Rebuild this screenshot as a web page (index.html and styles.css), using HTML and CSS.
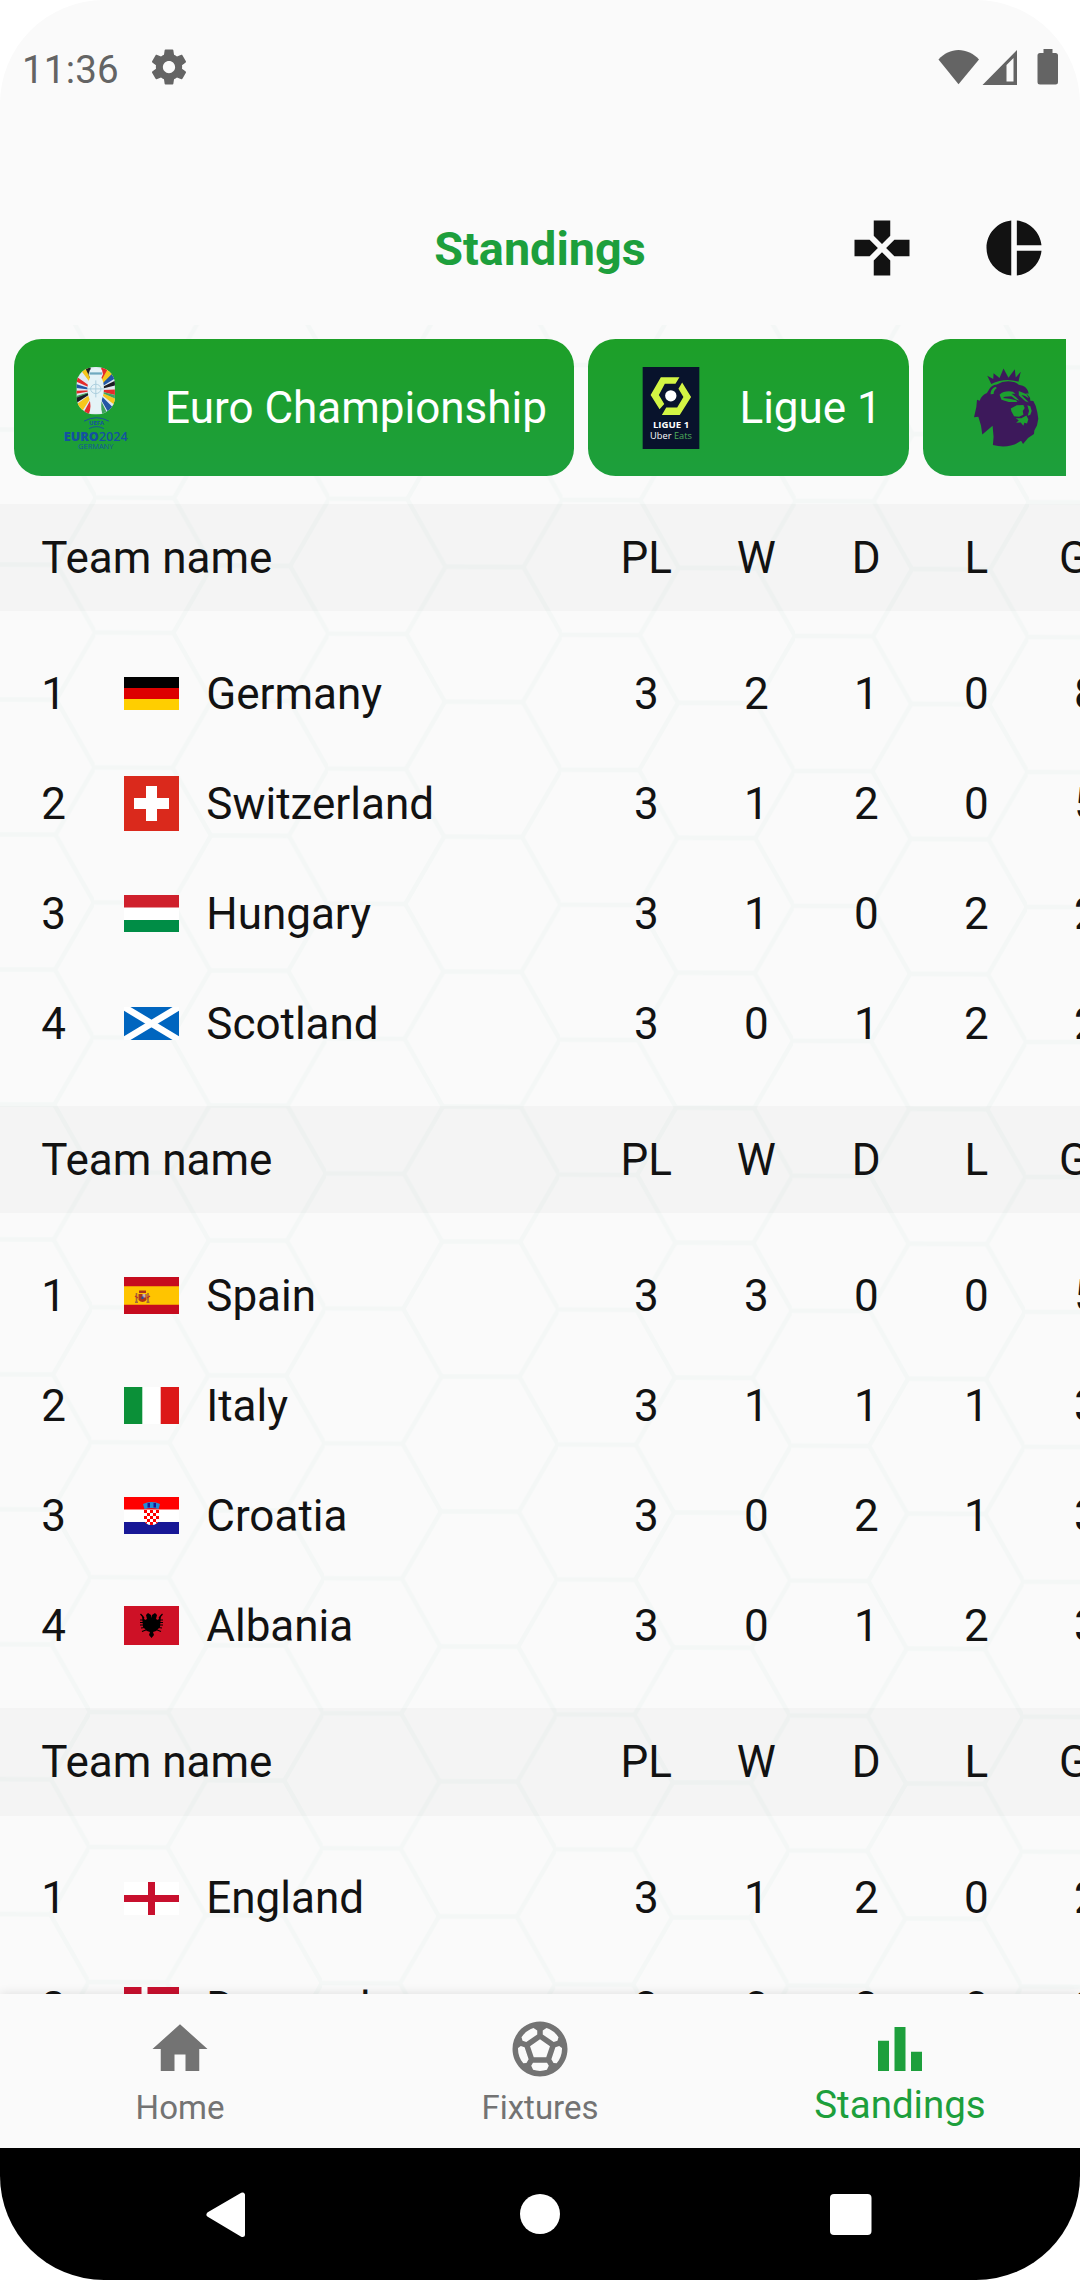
FILE: index.html
```html
<!DOCTYPE html>
<html lang="en">
<head>
<meta charset="utf-8">
<title>Standings</title>
<link rel="stylesheet" href="styles.css">
</head>
<body>
<div class="screen">
  <header class="status">
    <span class="clock">11:36</span>
    <svg class="gear" viewBox="0 0 24 24"><path d="M19.430 12.980c.04-.320.070-.640.070-.980s-.030-.660-.070-.980l2.110-1.650c.190-.150.240-.420.120-.640l-2-3.460c-.120-.220-.390-.300-.610-.220l-2.490 1c-.520-.400-1.080-.730-1.690-.980l-.380-2.650C14.460 2.180 14.250 2 14 2h-4c-.250 0-.460.180-.490.420l-.380 2.650c-.610.250-1.170.590-1.690.980l-2.490-1c-.230-.090-.490 0-.610.220l-2 3.460c-.130.220-.070.490.120.640l2.110 1.650c-.040.320-.070.650-.070.980s.030.660.070.980l-2.110 1.650c-.190.150-.240.420-.120.640l2 3.460c.120.220.390.300.610.220l2.490-1c.520.400 1.080.730 1.690.980l.380 2.650c.030.240.240.420.490.420h4c.250 0 .460-.180.490-.420l.380-2.650c.610-.250 1.170-.590 1.690-.980l2.490 1c.230.090.490 0 .610-.220l2-3.460c.120-.220.070-.490-.120-.640l-2.110-1.650zM12 15.500c-1.930 0-3.500-1.570-3.500-3.500s1.570-3.500 3.500-3.500 3.500 1.570 3.500 3.500-1.570 3.500-3.500 3.500z"/></svg>
    <svg class="signals" viewBox="0 0 122 38">
      <path d="M0.500 11.500C6 5.500 13 2 20.500 2S35.500 5.500 41 11.500L20.500 36.300Z"/>
      <path fill-rule="evenodd" d="M44.500 37L79 2v35zM68.500 17v16.500h7V10z"/>
      <path d="M105.500 1h9v4h3a2.500 2.500 0 0 1 2.500 2.500v26.500a2.500 2.500 0 0 1-2.500 2.500h-15.500a2.500 2.500 0 0 1-2.500-2.500V7.500A2.500 2.500 0 0 1 102 5h3.500z"/>
    </svg>
  </header>

  <div class="appbar">
    <h1>Standings</h1>
    <nav class="actions">
      <svg viewBox="0 0 24 24"><path d="M15 7.500V2H9v5.500l3 3 3-3zM7.500 9H2v6h5.500l3-3-3-3zM9 16.500V22h6v-5.500l-3-3-3 3zM16.500 9l-3 3 3 3H22V9h-5.500z"/></svg>
      <svg viewBox="0 0 24 24"><path d="M11 2v20c-5.070-.5-9-4.790-9-10s3.930-9.500 9-10zm2.030 0v8.990H22c-.470-4.740-4.240-8.520-8.970-8.990zm0 11.010V22c4.740-.470 8.500-4.250 8.970-8.990h-8.970z"/></svg>
    </nav>
  </div>

  <main class="content">
    <svg class="hexes" width="1080" height="1669">
      <defs>
        <pattern id="hex" width="233.250" height="134.950" patternUnits="userSpaceOnUse" patternTransform="translate(95.300 307.500) rotate(0.28)">
          <path class="cell" d="M-10 0H78L116.600 67.500H194.600L233.250 0M194.600 67.500L233.250 134.950H243M116.600 67.500L78 134.950H-10"/>
        </pattern>
      </defs>
      <rect width="1080" height="1669" fill="url(#hex)"/>
    </svg>

    <div class="leagues">
      <div class="chip">
        <svg class="logo" viewBox="0 0 110 83">
          <defs><clipPath id="oval"><rect x="35.500" y="0" width="38.500" height="53" rx="18.500"/></clipPath></defs>
          <g transform="scale(1 .9)">
            <g clip-path="url(#oval)">
              <path fill="#dfe9f2" d="M35 0h40v53H35z"/>
              <path fill="#f6c61c" d="M54.800 26L46-6 36-2zM54.800 26L66-2 76 6zM54.800 26L30 46 36 58zM54.800 26L80 38 80 48z"/>
              <path fill="#1c1c24" d="M54.800 26L42-4 48-6zM54.800 26L80 12 80 19zM54.800 26L28 36 30 44z"/>
              <path fill="#e42c2c" d="M54.800 26L24 2 26 12zM54.800 26L62-6 70-4zM54.800 26L24 27 24 32zM54.800 26L80 25 80 33zM54.800 26L38 60 46 60z"/>
              <path fill="#2257a5" d="M54.800 26L26 16 24 22zM54.800 26L76 2 80 9zM54.800 26L72 60 78 52z"/>
              <path fill="#40a45c" d="M54.800 26L27 35 25 39zM54.800 26L80 33 80 38zM54.800 26L63 60 70 60z"/>
            </g>
            <path fill="#e5f3f7" d="M49 3c3-2 9-2 12 0l1 5-1.500 4c3 6 3.500 16 .5 24-1 5-1 10 0 16H48.500c1.500-6 1-11 0-16-3-8-2.500-18 .5-24L47.500 8z"/>
            <path fill="#6fa9bf" d="M48.500 6h12.500v2.500H48.500z"/>
            <path class="trophy" d="M54.800 15v19M46 24.500h17.500M60 24.500a5 5 0 1 1-10.400 0a5 5 0 1 1 10.400 0"/>
          </g>
          <path class="arcs" d="M43 54.500q12.500-7 25 0M48 62q7.500-4 15 0"/>
          <text class="uefa" x="55.500" y="58.800">UEFA</text>
          <text class="euro" x="22.500" y="74.200" textLength="64.500" lengthAdjust="spacingAndGlyphs"><tspan class="heavy">EURO</tspan>2024</text>
          <text class="host" x="37" y="82.300" textLength="35.500" lengthAdjust="spacingAndGlyphs">GERMANY</text>
        </svg>
        <span>Euro Championship</span>
      </div>
      <div class="chip">
        <svg class="logo" viewBox="0 0 110 83">
          <path fill="#08132c" d="M26.500 0h57v82.500h-57z"/>
          <path fill="#d3f544" d="M44.800 10.200h18.700l-4 6.600H48.800l-6 11.400 5.400 9-4.700 5.300-9-14.300zM66.200 15.500l9 14.700-11.400 18h-18l4.400-7.400h11l6.300-10.600-5-8.400z"/>
          <circle cx="54.800" cy="29" r="5.700" fill="#fff"/>
          <text class="ligue" x="36.800" y="61" textLength="36.500" lengthAdjust="spacingAndGlyphs">LIGUE 1</text>
          <text class="sponsor" x="34" y="72" textLength="42" lengthAdjust="spacingAndGlyphs">Uber <tspan fill="#4fae5b">Eats</tspan></text>
        </svg>
        <span>Ligue 1</span>
      </div>
      <div class="chip">
        <svg class="logo" viewBox="0 0 110 83">
          <g transform="translate(14.500 -4.500) scale(.3333)">
            <path fill="#3d195b" d="M65 40l18 10 1-18 18 15 12-29 15 28 19-26 3 25 15-17-7 30q-42-13-82 7z"/>
            <path fill="#3d195b" d="M70 82Q76 68 94 66Q112 55 135 57Q152 58 160 67L172 70Q188 77 190 94L182 92L194 106L195 115L204 116Q214 132 216 150L219 170L215 190L207 205L206 216L188 228L173 246L167 236Q130 262 82 249L84 224L81 191L50 217L46 190L38 164L25 165L32 134L34 112L42 115Q48 98 64 92Z"/>
            <g fill="#1d9f30">
              <path d="M75 96Q74 80 90 73L94 77Q84 84 84 95Z"/>
              <path d="M102 97Q116 84 142 88L150 94L138 94L152 105L162 115L150 111L138 102L118 103L112 107L132 109L152 114L156 119L130 119L108 112Z"/>
              <path d="M160 86L184 96L190 108L178 100L168 98L184 114L190 121L180 117L160 99Z"/>
              <path d="M136 139L154 129L174 128L178 137L172 146L174 158L161 164L146 162L138 148Z"/>
              <path d="M186 129L195 132L199 146L195 158L187 161L191 146Z"/>
              <path d="M151 168L168 168L183 160L189 171L185 184L177 182L174 191L166 181L152 182L160 175Z"/>
            </g>
          </g>
        </svg>
        <span>Premier League</span>
      </div>
    </div>

    <section class="group">
      <div class="row head first"><b class="team">Team name</b><i>PL</i><i>W</i><i>D</i><i>L</i><i>GF</i></div>
      <div class="rows">
        <div class="row"><b class="rank">1</b><svg class="flag" viewBox="0 0 55 33"><path d="M0 0h55v11H0z"/><path fill="#d00" d="M0 11h55v11H0z"/><path fill="#ffce00" d="M0 22h55v11H0z"/></svg><b class="name">Germany</b><i>3</i><i>2</i><i>1</i><i>0</i><i>8</i></div>
        <div class="row"><b class="rank">2</b><svg class="flag" viewBox="0 0 55 55"><path fill="#da291c" d="M0 0h55v55H0z"/><path fill="#fff" d="M22 10h11v12h12v11H33v12H22V33H10V22h12z"/></svg><b class="name">Switzerland</b><i>3</i><i>1</i><i>2</i><i>0</i><i>5</i></div>
        <div class="row"><b class="rank">3</b><svg class="flag" viewBox="0 0 55 37"><path fill="#fff" d="M0 0h55v37H0z"/><path fill="#cf202c" d="M0 0h55v12.500H0z"/><path fill="#008d46" d="M0 25h55v12H0z"/></svg><b class="name">Hungary</b><i>3</i><i>1</i><i>0</i><i>2</i><i>2</i></div>
        <div class="row"><b class="rank">4</b><svg class="flag" viewBox="0 0 55 33"><path fill="#0065bf" d="M0 0h55v33H0z"/><path stroke="#fff" stroke-width="6.600" d="M0 0l55 33M55 0L0 33"/></svg><b class="name">Scotland</b><i>3</i><i>0</i><i>1</i><i>2</i><i>2</i></div>
      </div>
    </section>
    <section class="group">
      <div class="row head"><b class="team">Team name</b><i>PL</i><i>W</i><i>D</i><i>L</i><i>GF</i></div>
      <div class="rows">
        <div class="row"><b class="rank">1</b><svg class="flag" viewBox="0 0 55 37"><path fill="#c60b1e" d="M0 0h55v37H0z"/><path fill="#ffc400" d="M0 9.250h55v18.500H0z"/><path fill="#ad3519" d="M14.500 17h8v6q-4 4-8 0zM15 13.500h7v2.500h-7z"/><path fill="#c8b0b0" d="M18.500 17h3v3.500h-3z"/><path fill="#1d50a0" d="M17.500 19.500h2V22h-2z"/><path stroke="#a1673b" stroke-width="1.600" d="M12.500 16v9.500M24 16v9.500M11 25.200h3M22.500 25.200h3"/><path stroke="#c0302b" stroke-width="1.400" d="M11 19l3 2M23 21l3-2"/></svg><b class="name">Spain</b><i>3</i><i>3</i><i>0</i><i>0</i><i>5</i></div>
        <div class="row"><b class="rank">2</b><svg class="flag" viewBox="0 0 55 37"><path fill="#fff" d="M0 0h55v37H0z"/><path fill="#0b9038" d="M0 0h18.300v37H0z"/><path fill="#dc1818" d="M36.700 0H55v37H36.700z"/></svg><b class="name">Italy</b><i>3</i><i>1</i><i>1</i><i>1</i><i>3</i></div>
        <div class="row"><b class="rank">3</b><svg class="flag" viewBox="0 0 55 37"><defs><clipPath id="shield"><path d="M20 13h15v9q-1 6-7.500 6T20 22z"/></clipPath></defs><path fill="#fff" d="M0 12h55v13H0z"/><path fill="red" d="M0 0h55v12.500H0z"/><path fill="#171796" d="M0 25h55v12H0z"/><g clip-path="url(#shield)"><path fill="#fff" d="M20 12h15v17H20z"/><path stroke="red" stroke-width="3" stroke-dasharray="3 3" d="M20 14.500h15M20 20.500h15M20 26.500h15M23 17.500h12M23 23.500h12"/></g><path fill="#1f8fd8" d="M19 7l4-1.500 4.500-.5 4.500.5L36 7l-1.500 5q-7-2-14 0z"/><path fill="#171796" d="M23.500 6h2.500v4.500h-2.500zM29.500 6H32v4.500h-2.500z"/></svg><b class="name">Croatia</b><i>3</i><i>0</i><i>2</i><i>1</i><i>3</i></div>
        <div class="row"><b class="rank">4</b><svg class="flag" viewBox="0 0 55 39"><path fill="#ce1126" d="M0 0h55v39H0z"/><path d="M22 9l2-2 3 2 .5 3 .5-3 3-2 2 2-1 4 2 1 3-5-1 12-4 4-3 1 1 3-2.500 3-2.500-3 1-3-3-1-4-4-1-12 3 5 2-1z"/><path stroke="#000" stroke-width="1.200" d="M20 12l-3.500-4M20 14h-4M20 16.500h-4M20 19h-4M21 21.500l-4 .5M35 12l3.500-4M35 14h4M35 16.500h4M35 19h4M34 21.500l4 .5M23 23.500l-5 2M32 23.500l5 2M27.500 25v6"/></svg><b class="name">Albania</b><i>3</i><i>0</i><i>1</i><i>2</i><i>3</i></div>
      </div>
    </section>
    <section class="group">
      <div class="row head"><b class="team">Team name</b><i>PL</i><i>W</i><i>D</i><i>L</i><i>GF</i></div>
      <div class="rows">
        <div class="row"><b class="rank">1</b><svg class="flag" viewBox="0 0 55 33"><path fill="#fff" d="M0 0h55v33H0z"/><path fill="#c8102e" d="M24 0h7v13h24v7H31v13h-7V20H0v-7h24z"/></svg><b class="name">England</b><i>3</i><i>1</i><i>2</i><i>0</i><i>2</i></div>
        <div class="row"><b class="rank">2</b><svg class="flag" viewBox="0 0 55 42"><path fill="#c8102e" d="M0 0h55v42H0z"/><path fill="#fff" d="M17.500 0h6v18H55v6H23.500v18h-6V24H0v-6h17.500z"/></svg><b class="name">Denmark</b><i>3</i><i>0</i><i>3</i><i>0</i><i>2</i></div>
      </div>
    </section>
  </main>

  <nav class="tabs">
    <a class="tab"><svg viewBox="0 0 24 24"><path d="M10 20v-6h4v6h5v-8h3L12 3 2 12h3v8z"/></svg><span>Home</span></a>
    <a class="tab"><svg viewBox="0 0 24 24"><path d="M12 2C6.480 2 2 6.480 2 12s4.480 10 10 10 10-4.480 10-10S17.520 2 12 2zm1 3.300l1.350-.95c1.820.56 3.370 1.760 4.380 3.340l-.39 1.340-1.350.46L13 6.700V5.300zm-3.350-.95L11 5.300v1.400L7.010 9.490l-1.350-.46-.39-1.340c1.010-1.570 2.560-2.770 4.380-3.340zM7.080 17.110l-1.140.1C4.730 15.810 4 13.990 4 12c0-.12.010-.23.020-.35l1-.73 1.380.48 1.460 4.340-.78 1.370zm7.420 2.480c-.79.26-1.630.41-2.500.41s-1.710-.15-2.500-.41l-.69-1.490.64-1.100h5.110l.64 1.110-.7 1.480zM14.270 15H9.730l-1.350-4.020L12 8.440l3.630 2.540L14.270 15zm3.790 2.210l-1.140-.1-.79-1.370 1.460-4.340 1.390-.47 1 .73c.010.110.020.220.020.340 0 1.990-.73 3.810-1.940 5.210z"/></svg><span>Fixtures</span></a>
    <a class="tab active"><svg viewBox="0 0 24 24"><path d="M4 9h4v11H4zm12 4h4v7h-4zm-6-9h4v16h-4z"/></svg><span>Standings</span></a>
  </nav>

  <footer class="sysnav">
    <svg viewBox="0 0 1080 132">
      <path stroke="#fff" stroke-width="5" stroke-linejoin="round" d="M209 66.500L242.500 47v39.500z"/>
      <circle cx="540" cy="66" r="20"/>
      <rect x="830" y="46" width="41.500" height="41" rx="4"/>
    </svg>
  </footer>
</div>
</body>
</html>
```
FILE: styles.css
```css
* { box-sizing: border-box; }
body { margin: 0; background: #fff; font-family: Roboto, sans-serif; }
b, i { font-weight: 400; font-style: normal; }

.screen {
  width: 1080px;
  height: 2280px;
  display: flex;
  flex-direction: column;
  overflow: hidden;
  background: #fafafa;
  border-radius: 104px;
}

.status {
  height: 136px;
  padding: 0 20px 43px 22px;
  display: flex;
  align-items: center;
  fill: #646464;
}
.clock { width: 125.5px; font-size: 38.5px; letter-spacing: 0.2px; line-height: 46px; margin-top: 46px; color: #646464; }
.gear { width: 42px; height: 42px; margin-top: 41px; }
.signals { width: 122px; height: 38px; margin: 41px 0 0 auto; }

.appbar {
  height: 188.5px;
  padding: 35px 33px 0;
  display: grid;
  grid-template-columns: 1fr auto 1fr;
  align-items: center;
}
.appbar h1 {
  grid-column: 2;
  margin: 2px 0 0;
  font-size: 46.75px;
  font-weight: 700;
  color: #1d9f3c;
}
.actions { display: flex; justify-content: flex-end; gap: 66px; fill: #121212; }
.actions svg { width: 66px; height: 66px; }

.content {
  flex: none;
  height: 1669.5px;
  position: relative;
  overflow: hidden;
}
.hexes { position: absolute; inset: 0; }
.cell { fill: none; stroke: #f4f7f6; stroke-width: 4.5px; }

.leagues {
  position: relative;
  margin: 0 13.75px;
  padding: 14.25px 0 27.5px;
  display: flex;
  gap: 13.75px;
  overflow: hidden;
}
.chip {
  flex: none;
  height: 137.5px;
  padding: 0 27.5px;
  display: flex;
  align-items: center;
  gap: 13.75px;
  border-radius: 27.5px;
  background: linear-gradient(#1d9f28, #1d9f3c);
  color: #fff;
  font-size: 44px;
}
.logo { width: 110px; height: 82.5px; margin-top: 1px; }
.trophy, .arcs { fill: none; stroke: #a9cddd; stroke-width: 1; }
.arcs { stroke: #1451a0; }
.uefa, .euro, .host { fill: #1451a0; font-family: "Open Sans", sans-serif; }
.uefa { font-size: 6px; font-weight: 700; text-anchor: middle; }
.euro { font-size: 12.2px; font-weight: 600; }
.heavy { font-weight: 800; }
.host { font-size: 7px; }
.ligue { fill: #fff; font: 700 9px "Open Sans", sans-serif; }
.sponsor { fill: #fff; font: 9px "Open Sans", sans-serif; }

.group { position: relative; width: 1155px; color: #121212; font-size: 44px; }
.row { height: 110px; padding-left: 41.25px; display: flex; align-items: center; }
.row i { width: 110px; text-align: center; }
.head { height: 107.25px; background: rgba(0, 0, 0, 0.024); }
.first { padding-top: 1px; }
.team { width: 550px; }
.rows { padding: 27.5px 0; }
.rank { width: 82.5px; }
.flag { width: 55px; margin-right: 27.5px; }
.name { width: 385px; }

.tabs {
  position: relative;
  flex: none;
  height: 154px;
  display: grid;
  grid-template-columns: repeat(3, 1fr);
  background: #fafafa;
  box-shadow: 0 0 10px rgba(0, 0, 0, 0.12);
  color: #737373;
  fill: #737373;
  font-size: 33px;
}
.tab {
  padding-top: 22px;
  display: flex;
  flex-direction: column;
  align-items: center;
}
.tab svg { width: 66px; height: 66px; }
.tab span { line-height: 40px; margin-top: 6px; }
.tab.active span { margin-top: 3px; }
.active { color: #1d9f3c; fill: #1d9f3c; font-size: 38.5px; }

.sysnav { flex: none; height: 132px; background: #000; fill: #fff; }
```
